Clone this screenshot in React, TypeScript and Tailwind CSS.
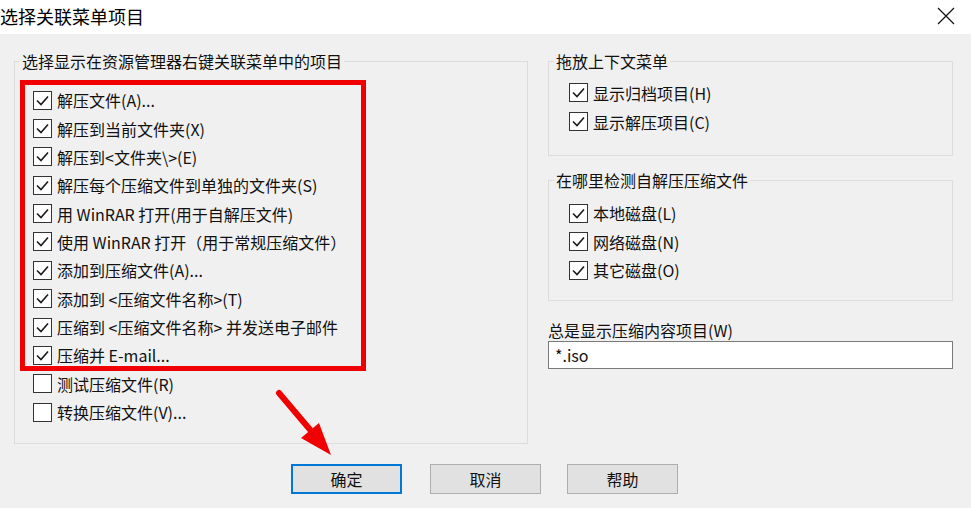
import React from "react";

const leftItems: { label: string; checked: boolean }[] = [
  { label: "解压文件(A)...", checked: true },
  { label: "解压到当前文件夹(X)", checked: true },
  { label: "解压到<文件夹\\>(E)", checked: true },
  { label: "解压每个压缩文件到单独的文件夹(S)", checked: true },
  { label: "用 WinRAR 打开(用于自解压文件)", checked: true },
  { label: "使用 WinRAR 打开（用于常规压缩文件）", checked: true },
  { label: "添加到压缩文件(A)...", checked: true },
  { label: "添加到 <压缩文件名称>(T)", checked: true },
  { label: "压缩到 <压缩文件名称> 并发送电子邮件", checked: true },
  { label: "压缩并 E-mail...", checked: true },
  { label: "测试压缩文件(R)", checked: false },
  { label: "转换压缩文件(V)...", checked: false },
];

function CheckRow({ label, checked, h }: { label: string; checked: boolean; h: string }) {
  return (
    <div className={`flex items-center gap-[5px] ${h}`}>
      <div className="w-[19px] h-[19px] shrink-0 border border-[#333333] bg-white flex items-center justify-center">
        {checked && (
          <svg width="17" height="17" viewBox="0 0 17 17">
            <polyline points="3,8.5 7,12.5 14,4.5" fill="none" stroke="#1a1a1a" strokeWidth="1.6" />
          </svg>
        )}
      </div>
      <span className="text-[16px] leading-[20px] text-[#111] whitespace-nowrap">{label}</span>
    </div>
  );
}

function Group({
  title,
  className,
  bodyClass,
  children,
}: {
  title: string;
  className: string;
  bodyClass: string;
  children: React.ReactNode;
}) {
  return (
    <fieldset className={`border border-[#dcdcdc] ${className}`}>
      <legend className="ml-[5px] px-[2px] text-[16px] leading-[20px] text-[#111]">{title}</legend>
      <div className={bodyClass}>{children}</div>
    </fieldset>
  );
}

export default function App() {
  return (
    <div
      className="relative w-[971px] h-[508px] bg-[#f0f0f0] overflow-hidden"
      style={{ fontFamily: '"Noto Sans CJK SC", "Noto Sans", sans-serif' }}
    >
      {/* title bar */}
      <div className="h-[34px] bg-white flex items-center justify-between">
        <span className="text-[18px] leading-[22px] text-black -mt-[2px]">选择关联菜单项目</span>
        <svg width="18" height="18" viewBox="0 0 18 18" className="mr-[16px] -mt-[2px]">
          <path d="M1 1 L17 17 M17 1 L1 17" stroke="#111" strokeWidth="1.2" />
        </svg>
      </div>

      <div className="flex mt-[17px]">
        <Group
          title="选择显示在资源管理器右键关联菜单中的项目"
          className="ml-[14px] w-[514px] h-[393px]"
          bodyClass="pt-[15px] pl-[18px] flex flex-col"
        >
          {leftItems.map((it) => (
            <CheckRow key={it.label} label={it.label} checked={it.checked} h="h-[28.36px]" />
          ))}
        </Group>

        <div className="ml-[20px] w-[405px] flex flex-col">
          <Group title="拖放上下文菜单" className="w-[405px] h-[105px]" bodyClass="pt-[7px] pl-[20px]">
            <CheckRow label="显示归档项目(H)" checked h="h-[29px]" />
            <CheckRow label="显示解压项目(C)" checked h="h-[29px]" />
          </Group>

          <Group
            title="在哪里检测自解压压缩文件"
            className="w-[405px] h-[131px] mt-[14px]"
            bodyClass="pt-[9px] pl-[20px]"
          >
            <CheckRow label="本地磁盘(L)" checked h="h-[28.5px]" />
            <CheckRow label="网络磁盘(N)" checked h="h-[28.5px]" />
            <CheckRow label="其它磁盘(O)" checked h="h-[28.5px]" />
          </Group>

          <div className="mt-[19px] text-[16px] leading-[20px] text-[#111]">总是显示压缩内容项目(W)</div>
          <div className="mt-[1px] h-[28px] w-[405px] bg-white border border-[#7a7a7a] flex items-center px-[6px] text-[16px] text-[#111]">
            *.iso
          </div>
        </div>
      </div>

      {/* buttons */}
      <div className="flex mt-[20px] ml-[291px]">
        <button className="w-[111px] h-[30px] bg-[#e1e1e1] border-2 border-[#0078d7] text-[16px] text-[#111]">
          确定
        </button>
        <button className="ml-[28px] w-[111px] h-[30px] bg-[#e1e1e1] border border-[#adadad] text-[16px] text-[#111]">
          取消
        </button>
        <button className="ml-[26px] w-[111px] h-[30px] bg-[#e1e1e1] border border-[#adadad] text-[16px] text-[#111]">
          帮助
        </button>
      </div>

      {/* red annotation box */}
      <div className="absolute left-[20px] top-[80px] w-[346px] h-[291px] border-[5px] border-[#f00000] pointer-events-none" />

      {/* red annotation arrow */}
      <svg className="absolute left-[260px] top-[380px] pointer-events-none" width="90" height="90" viewBox="260 380 90 90">
        <line x1="279" y1="393" x2="312" y2="432" stroke="#f00000" strokeWidth="6" strokeLinecap="round" />
        <polygon points="331,455 319,423 301,438" fill="#f00000" />
      </svg>
    </div>
  );
}
